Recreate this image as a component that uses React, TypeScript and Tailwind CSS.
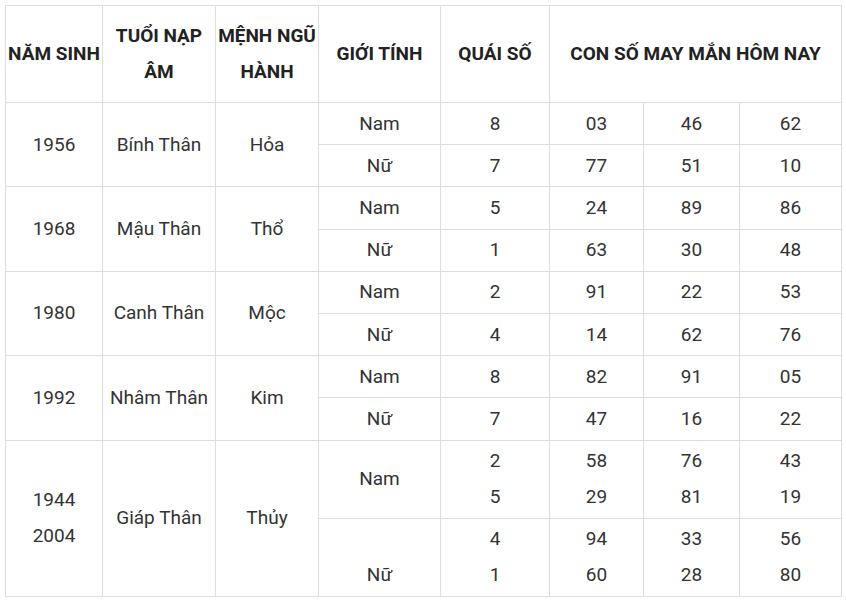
const GROUPS = [
  { year: '1956', napAm: 'Bính Thân', menh: 'Hỏa', nam: { q: '8', n: ['03', '46', '62'] }, nu: { q: '7', n: ['77', '51', '10'] } },
  { year: '1968', napAm: 'Mậu Thân', menh: 'Thổ', nam: { q: '5', n: ['24', '89', '86'] }, nu: { q: '1', n: ['63', '30', '48'] } },
  { year: '1980', napAm: 'Canh Thân', menh: 'Mộc', nam: { q: '2', n: ['91', '22', '53'] }, nu: { q: '4', n: ['14', '62', '76'] } },
  { year: '1992', napAm: 'Nhâm Thân', menh: 'Kim', nam: { q: '8', n: ['82', '91', '05'] }, nu: { q: '7', n: ['47', '16', '22'] } },
];

const td = 'border border-[#dddddd] text-center align-middle px-1 py-[2.6px] whitespace-nowrap';
const tdLast = 'border border-[#dddddd] text-center align-middle px-1 py-[2.5px] whitespace-nowrap';
const th = 'border border-[#dddddd] text-center align-middle px-0 py-3 font-bold text-[#222] whitespace-nowrap';

function Two({ a, b }: { a: string; b: string }) {
  return (
    <>
      {a}
      <br />
      {b}
    </>
  );
}

export default function App() {
  return (
    <div className="bg-white p-[5px] w-[846px] h-[602px]" style={{ fontFamily: 'Roboto, "Noto Sans", sans-serif' }}>
      <table className="table-fixed border-collapse w-[836px] text-[19px] leading-[36px] text-[#333]">
        <colgroup>
          <col className="w-[97px]" />
          <col className="w-[113px]" />
          <col className="w-[103px]" />
          <col className="w-[122px]" />
          <col className="w-[109px]" />
          <col className="w-[94px]" />
          <col className="w-[96px]" />
          <col className="w-[102px]" />
        </colgroup>
        <thead>
          <tr>
            <th className={th}>NĂM SINH</th>
            <th className={th}>
              <Two a="TUỔI NẠP" b="ÂM" />
            </th>
            <th className={th}>
              <Two a="MỆNH NGŨ" b="HÀNH" />
            </th>
            <th className={th}>GIỚI TÍNH</th>
            <th className={th}>QUÁI SỐ</th>
            <th className={th} colSpan={3}>
              CON SỐ MAY MẮN HÔM NAY
            </th>
          </tr>
        </thead>
        <tbody>
          {GROUPS.map((g) => (
            <>
              <tr key={g.year + 'a'}>
                <td className={td} rowSpan={2}>{g.year}</td>
                <td className={td} rowSpan={2}>{g.napAm}</td>
                <td className={td} rowSpan={2}>{g.menh}</td>
                <td className={td}>Nam</td>
                <td className={td}>{g.nam.q}</td>
                {g.nam.n.map((x, i) => (
                  <td key={i} className={td}>{x}</td>
                ))}
              </tr>
              <tr key={g.year + 'b'}>
                <td className={td}>Nữ</td>
                <td className={td}>{g.nu.q}</td>
                {g.nu.n.map((x, i) => (
                  <td key={i} className={td}>{x}</td>
                ))}
              </tr>
            </>
          ))}
          <tr>
            <td className={tdLast} rowSpan={2}>
              <Two a="1944" b="2004" />
            </td>
            <td className={tdLast} rowSpan={2}>Giáp Thân</td>
            <td className={tdLast} rowSpan={2}>Thủy</td>
            <td className={tdLast}>Nam</td>
            <td className={tdLast}><Two a="2" b="5" /></td>
            <td className={tdLast}><Two a="58" b="29" /></td>
            <td className={tdLast}><Two a="76" b="81" /></td>
            <td className={tdLast}><Two a="43" b="19" /></td>
          </tr>
          <tr>
            <td className={tdLast}><Two a="" b="Nữ" /></td>
            <td className={tdLast}><Two a="4" b="1" /></td>
            <td className={tdLast}><Two a="94" b="60" /></td>
            <td className={tdLast}><Two a="33" b="28" /></td>
            <td className={tdLast}><Two a="56" b="80" /></td>
          </tr>
        </tbody>
      </table>
    </div>
  );
}
